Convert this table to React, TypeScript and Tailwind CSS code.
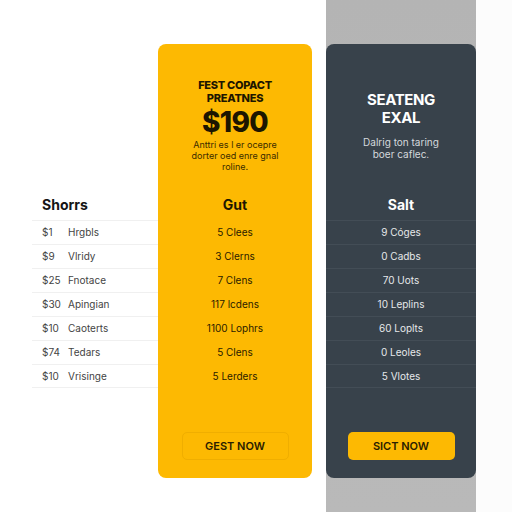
import React from "react";

const leftRows = [
  ["$1", "Hrgbls"],
  ["$9", "Vlridy"],
  ["$25", "Fnotace"],
  ["$30", "Apingian"],
  ["$10", "Caoterts"],
  ["$74", "Tedars"],
  ["$10", "Vrisinge"],
];
const yellowRows = ["5 Clees", "3 Clerns", "7 Clens", "117 lcdens", "1100 Lophrs", "5 Clens", "5 Lerders"];
const darkRows = ["9 Cóges", "0 Cadbs", "70 Uots", "10 Leplins", "60 Loplts", "0 Leoles", "5 Vlotes"];

export default function App() {
  return (
    <div
      className="w-[512px] h-[512px] bg-white flex overflow-hidden"
      style={{ fontFamily: "Inter, 'Liberation Sans', sans-serif" }}
    >
      {/* left column */}
      <div className="w-[158px] flex flex-col pt-[188px]">
        <div className="h-[32px] flex items-center pl-[42px] text-[14px] font-bold text-[#151515]">Shorrs</div>
        <div className="pl-[32px]">
          {leftRows.map(([p, l], i) => (
            <div
              key={i}
              className={`h-[24px] flex items-center pl-[10px] border-t border-[#f0f0f0] text-[10px] text-[#444] ${i === leftRows.length - 1 ? "border-b" : ""}`}
            >
              <span className="w-[26px]">{p}</span>
              <span>{l}</span>
            </div>
          ))}
        </div>
      </div>

      {/* yellow card */}
      <div className="w-[154px] mt-[44px] h-[434px] bg-[#fdb902] rounded-[8px] flex flex-col">
        <div className="h-[144px] flex flex-col items-center pt-[35px] text-[#1d1600]">
          <div className="text-[11px] font-extrabold leading-[13px] tracking-tight">FEST COPACT</div>
          <div className="text-[11px] font-extrabold leading-[13px] tracking-tight">PREATNES</div>
          <div className="text-[28px] font-extrabold leading-[34px] tracking-tight">$190</div>
          <div className="w-[96px] text-center text-[9px] leading-[11px] text-[#3a2b00]">
            Anttri es l er ocepre dorter oed enre gnal roline.
          </div>
        </div>
        <div className="h-[32px] flex items-center justify-center text-[14px] font-bold text-[#1d1600]">Gut</div>
        {yellowRows.map((r, i) => (
          <div key={i} className="h-[24px] flex items-center justify-center text-[10px] text-[#2a2000]">
            {r}
          </div>
        ))}
        <div className="flex-1" />
        <div className="flex justify-center pb-[18px]">
          <div className="w-[107px] h-[28px] border border-[#f0ae00] rounded-[5px] flex items-center justify-center text-[11px] font-semibold text-[#2a2000]">
            GEST NOW
          </div>
        </div>
      </div>

      <div className="w-[14px]" />

      {/* gray band with dark card */}
      <div className="w-[150px] h-[512px] bg-gradient-to-b from-[#b4b4b4] to-[#b9b9b9] flex flex-col pt-[44px]">
        <div className="h-[434px] bg-[#38424b] rounded-[8px] flex flex-col">
          <div className="h-[144px] flex flex-col items-center pt-[47px] text-white">
            <div className="text-[15px] font-bold leading-[18px] tracking-tight">SEATENG</div>
            <div className="text-[15px] font-bold leading-[18px] tracking-tight">EXAL</div>
            <div className="mt-[9px] w-[92px] text-center text-[10px] leading-[12px] text-[#d5d9dd]">
              Dalrig ton taring boer caflec.
            </div>
          </div>
          <div className="h-[32px] flex items-center justify-center text-[14px] font-bold text-white">Salt</div>
          {darkRows.map((r, i) => (
            <div
              key={i}
              className={`h-[24px] flex items-center justify-center text-[10px] text-[#e6e8ea] border-t border-[#434d56] ${i === darkRows.length - 1 ? "border-b" : ""}`}
            >
              {r}
            </div>
          ))}
          <div className="flex-1" />
          <div className="flex justify-center pb-[18px]">
            <div className="w-[107px] h-[28px] bg-[#fdb902] rounded-[5px] flex items-center justify-center text-[11px] font-semibold text-[#2a2000]">
              SICT NOW
            </div>
          </div>
        </div>
      </div>

      <div className="flex-1 bg-[#fcfcfc]" />
    </div>
  );
}
